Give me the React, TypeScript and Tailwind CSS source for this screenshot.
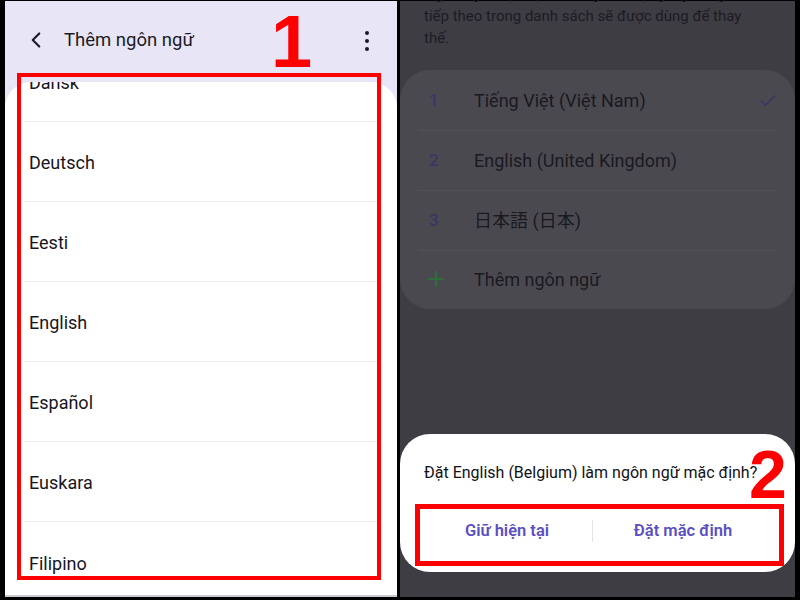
import { ChevronLeft, Check, Plus } from 'lucide-react';

const LANGS = ['Dansk', 'Deutsch', 'Eesti', 'English', 'Español', 'Euskara', 'Filipino'];

const SELECTED = [
  { n: '1', name: 'Tiếng Việt (Việt Nam)', checked: true },
  { n: '2', name: 'English (United Kingdom)' },
  { n: '3', name: '日本語 (日本)' },
];

const font = { fontFamily: 'Roboto, "Noto Sans CJK JP", sans-serif' };

export default function App() {
  return (
    <div
      className="relative w-[800px] h-[600px] bg-black flex gap-[3px] pt-[1px] pb-[3px] px-[5px] overflow-hidden"
      style={font}
    >
      {/* Left: add language */}
      <div className="w-[392px] h-full bg-[#e8e6f6] flex flex-col">
        <div className="h-[81px] flex items-start pt-[26px] pl-[18px] pr-[20px]">
          <ChevronLeft size={26} strokeWidth={2} className="text-[#1d1c24]" />
          <span className="ml-[15px] text-[18.5px] leading-[26px] text-[#1b1a22]">Thêm ngôn ngữ</span>
          <div className="ml-auto mt-[4px] flex flex-col gap-[4px] mr-[8px]">
            <span className="w-[4px] h-[4px] rounded-full bg-[#1b1a22]" />
            <span className="w-[4px] h-[4px] rounded-full bg-[#1b1a22]" />
            <span className="w-[4px] h-[4px] rounded-full bg-[#1b1a22]" />
          </div>
        </div>
        <div className="flex-1 bg-white rounded-t-[26px] overflow-hidden border-b-2 border-[#c9c9cf]">
          <div className="-mt-[40px]">
            {LANGS.map((l, i) => (
              <div key={l} className="h-[80px] flex flex-col">
                <div className="flex-1 flex items-center pl-[24px] pt-[2px] text-[18px] text-[#17161d]">{l}</div>
                {i < LANGS.length - 1 && <div className="mx-[19px] h-px bg-[#ececf1]" />}
              </div>
            ))}
          </div>
        </div>
      </div>

      {/* Right: dimmed language list with dialog */}
      <div className="w-[395px] h-full bg-[#3e3d44] flex flex-col">
        <div className="pl-[24px] pr-[16px] text-[15px] leading-[22px] text-[#1c1b23] -mt-[18px]">
          <p>Ngôn ngữ mặc định không khả dụng, ngôn ngữ</p>
          <p>tiếp theo trong danh sách sẽ được dùng để thay</p>
          <p>thế.</p>
        </div>
        <div className="mt-[21px] bg-[#4a4950] rounded-[30px] pt-[1px] pb-[2px]">
          {SELECTED.map((s) => (
            <div key={s.n} className="h-[60px] flex flex-col">
              <div className="flex-1 flex items-center">
                <span className="w-[74px] pl-[29px] text-[17px] font-medium text-[#393664]">{s.n}</span>
                <span className="text-[18px] text-[#1a1920]">{s.name}</span>
                {s.checked && <Check size={20} strokeWidth={2} className="ml-auto mr-[17px] text-[#393664]" />}
              </div>
              <div className="mx-[18px] h-px bg-[#525158]" />
            </div>
          ))}
          <div className="h-[56px] flex items-center">
            <div className="w-[74px] pl-[24px] flex items-center">
              <Plus size={24} strokeWidth={2.2} className="text-[#2e6e3b]" />
            </div>
            <span className="text-[18px] text-[#1a1920]">Thêm ngôn ngữ</span>
          </div>
        </div>

        <div className="mt-auto mb-[25px] bg-white rounded-[30px] h-[138px] flex flex-col">
          <div className="pl-[24px] pt-[28px] text-[16px] leading-[22px] text-[#121118]">
            Đặt English (Belgium) làm ngôn ngữ mặc định?
          </div>
          <div className="mt-[35px] flex items-center">
            <div className="w-[192px] pl-[22px] text-center text-[16.5px] font-semibold text-[#5a4fc2]">Giữ hiện tại</div>
            <div className="w-px h-[22px] bg-[#e3e3e8]" />
            <div className="flex-1 text-center text-[16.5px] font-semibold text-[#5a4fc2] pr-[22px]">Đặt mặc định</div>
          </div>
        </div>
      </div>

      {/* Annotations */}
      <div className="absolute left-[17px] top-[73px] w-[364px] h-[507px] border-[4px] border-[#ff0000]" />
      <div
        className="absolute left-[271px] top-[2px] text-[74px] leading-[80px] font-bold text-[#ff0000]"
        style={{ fontFamily: '"Liberation Sans", Arial, sans-serif' }}
      >
        1
      </div>
      <div className="absolute left-[415px] top-[504px] w-[369px] h-[62px] border-[5px] border-[#ff0000]" />
      <div
        className="absolute left-[749px] top-[438px] text-[68px] leading-[72px] font-bold text-[#ff0000]"
        style={{ fontFamily: '"Liberation Sans", Arial, sans-serif' }}
      >
        2
      </div>
    </div>
  );
}
